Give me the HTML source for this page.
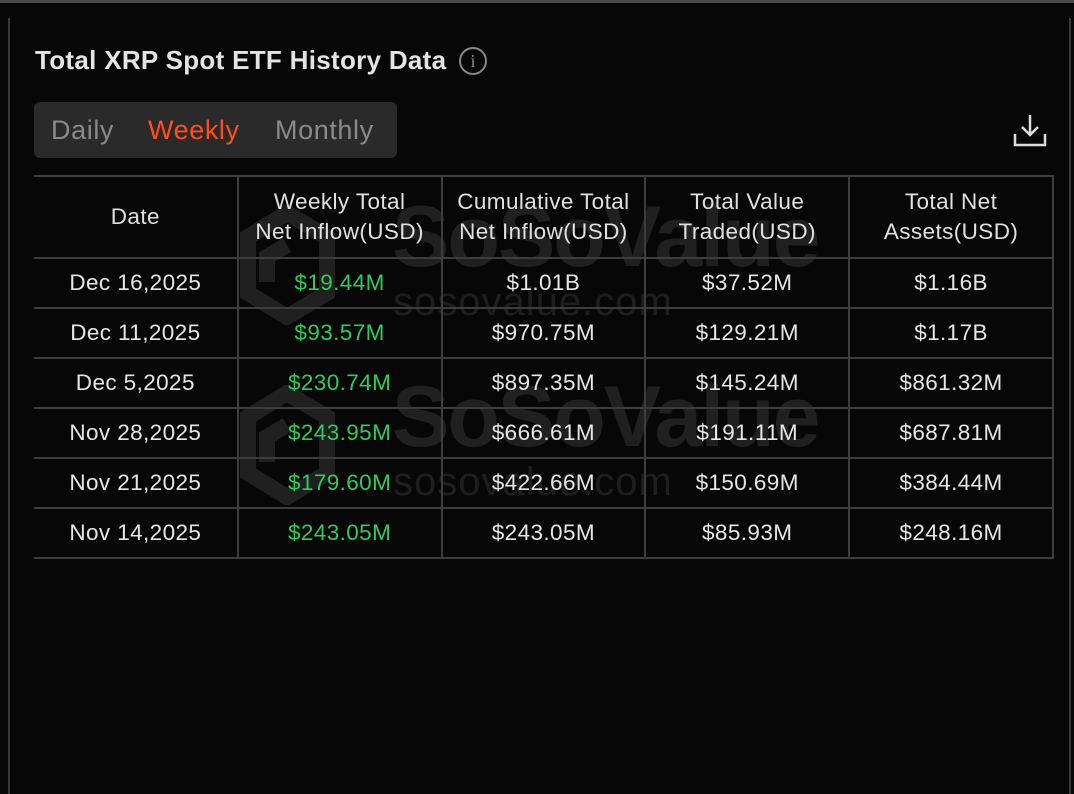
<!DOCTYPE html>
<html><head><meta charset="utf-8"><style>
*{margin:0;padding:0;box-sizing:border-box}
body{width:1074px;height:794px;background:#070707;font-family:"Liberation Sans",sans-serif;position:relative;overflow:hidden;color:#e6e6e6}
.top{position:absolute;left:0;top:0;width:1074px;height:3px;background:#4a4a4a}
.vl{position:absolute;top:18px;bottom:0;width:2px;background:#3a3a3a}
.title{position:absolute;left:35px;top:45px;font-size:26px;font-weight:bold;color:#e4e4e4;letter-spacing:0.3px}
.info{position:absolute;left:459px;top:47px;width:28px;height:28px;border:2px solid #888;border-radius:50%;color:#888;font-size:18px;text-align:center;line-height:24px;font-family:"Liberation Serif",serif}
.tabs{position:absolute;left:34px;top:102px;width:363px;height:56px;background:#2a2a2a;border-radius:6px}
.tabs span{position:absolute;top:13px;font-size:27px;color:#8a8a8a;letter-spacing:0.6px}
.wm{position:absolute;color:#202020;font-weight:bold;font-size:86px;letter-spacing:-2px}
.wm2{position:absolute;color:#1e1e1e;font-size:40px;letter-spacing:1px}
table{position:absolute;left:34px;top:175px;border-collapse:collapse;width:1020px}
td,th{border:2px solid #3d3d3d;text-align:center;width:204px;font-weight:normal;letter-spacing:0.4px}
th{height:82px;font-size:22.5px;line-height:30px;color:#e0e0e0}
td{height:50px;font-size:22.5px;color:#e6e6e6}
tr>*:first-child{border-left:none}
td.g{color:#2ecc5a}
</style></head><body>
<div class="top"></div>
<div class="vl" style="left:8px"></div>
<div class="vl" style="left:1069px"></div>
<div class="title">Total XRP Spot ETF History Data</div>
<div class="info">i</div>
<div class="tabs"><span style="left:17px">Daily</span><span style="left:114px;color:#ff4f1f">Weekly</span><span style="left:241px">Monthly</span></div>
<svg style="position:absolute;left:1012px;top:112px" width="36" height="36" viewBox="0 0 36 36" fill="none" stroke="#ddd" stroke-width="2.5"><path d="M18 3v20M10 15l8 8 8-8M3 22v11h30V22"/></svg>
<svg style="position:absolute;left:240px;top:205px" width="95" height="120" viewBox="0 0 95 120" fill="none" stroke="#202020" stroke-width="16"><path d="M47 8L87 32v56L47 112 8 88V32z M47 40l-20 12v25"/></svg>
<svg style="position:absolute;left:240px;top:385px" width="95" height="120" viewBox="0 0 95 120" fill="none" stroke="#202020" stroke-width="16"><path d="M47 8L87 32v56L47 112 8 88V32z M47 40l-20 12v25"/></svg>
<div class="wm" style="left:392px;top:188px">SoSoValue</div>
<div class="wm2" style="left:393px;top:280px">sosovalue.com</div>
<div class="wm" style="left:392px;top:368px">SoSoValue</div>
<div class="wm2" style="left:393px;top:460px">sosovalue.com</div>
<table>
<tr><th>Date</th><th>Weekly Total<br>Net Inflow(USD)</th><th>Cumulative Total<br>Net Inflow(USD)</th><th>Total Value<br>Traded(USD)</th><th>Total Net<br>Assets(USD)</th></tr>
<tr><td>Dec 16,2025</td><td class="g">$19.44M</td><td>$1.01B</td><td>$37.52M</td><td>$1.16B</td></tr>
<tr><td>Dec 11,2025</td><td class="g">$93.57M</td><td>$970.75M</td><td>$129.21M</td><td>$1.17B</td></tr>
<tr><td>Dec 5,2025</td><td class="g">$230.74M</td><td>$897.35M</td><td>$145.24M</td><td>$861.32M</td></tr>
<tr><td>Nov 28,2025</td><td class="g">$243.95M</td><td>$666.61M</td><td>$191.11M</td><td>$687.81M</td></tr>
<tr><td>Nov 21,2025</td><td class="g">$179.60M</td><td>$422.66M</td><td>$150.69M</td><td>$384.44M</td></tr>
<tr><td>Nov 14,2025</td><td class="g">$243.05M</td><td>$243.05M</td><td>$85.93M</td><td>$248.16M</td></tr>
</table>
</body></html>
